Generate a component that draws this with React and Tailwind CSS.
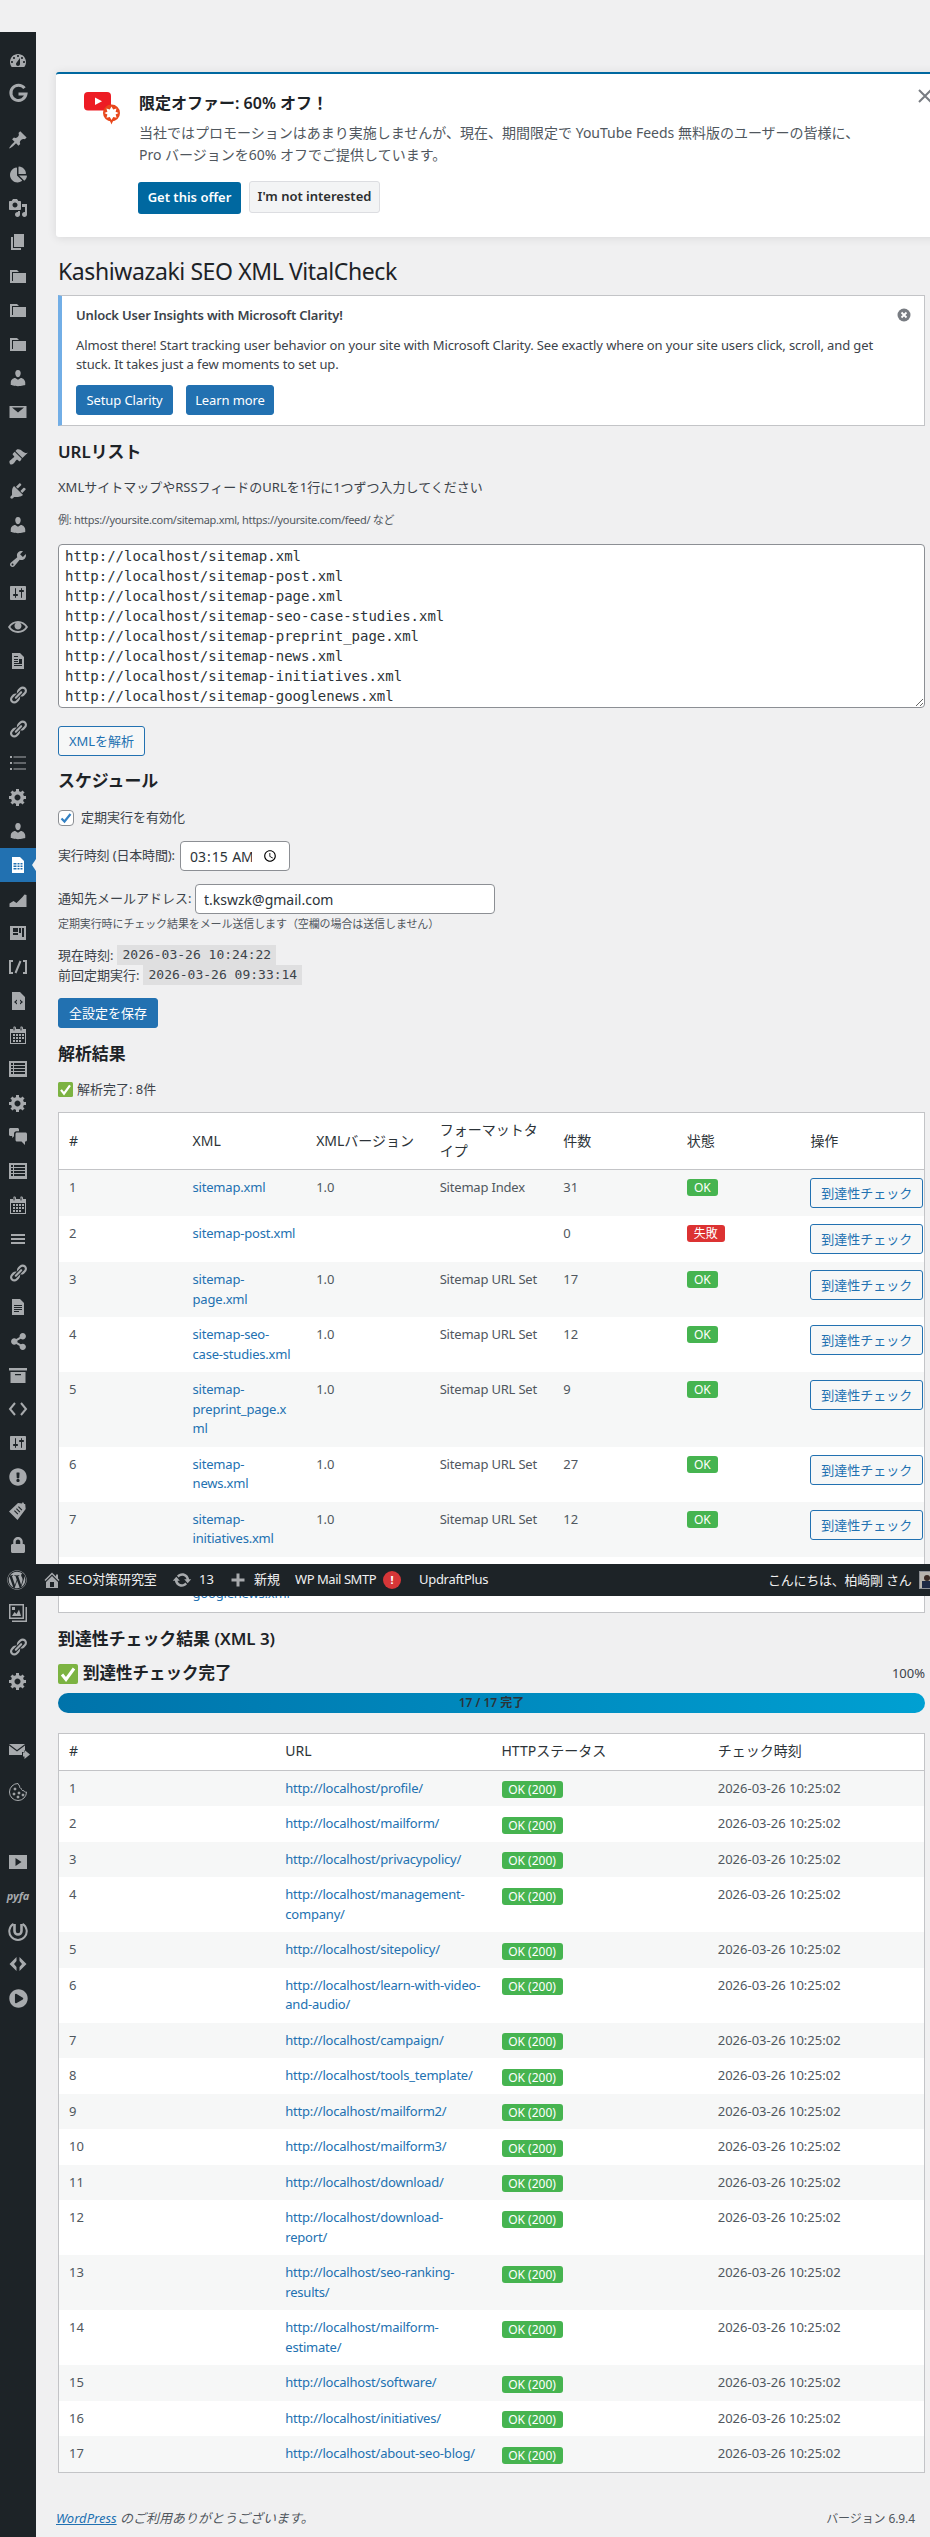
import React from "react";
import { FaChartPie, FaShareAlt, FaExclamationCircle, FaLock, FaWordpress, FaPlayCircle } from "react-icons/fa";

const P = {
  dashboard: "M3.76 16h12.48c1.1-1.37 1.76-3.11 1.76-5 0-4.42-3.58-8-8-8s-8 3.58-8 8c0 1.89.66 3.63 1.76 5zM10 4c.55 0 1 .45 1 1s-.45 1-1 1-1-.45-1-1 .45-1 1-1zM6 6c.55 0 1 .45 1 1s-.45 1-1 1-1-.45-1-1 .45-1 1-1zm8 0c.55 0 1 .45 1 1s-.45 1-1 1-1-.45-1-1 .45-1 1-1zm-5.37 5.55L12 7v6c0 1.1-.9 2-2 2s-2-.9-2-2c0-.57.24-1.08.63-1.45zM4 10c.55 0 1 .45 1 1s-.45 1-1 1-1-.45-1-1 .45-1 1-1zm12 0c.55 0 1 .45 1 1s-.45 1-1 1-1-.45-1-1 .45-1 1-1z",
  pin: "M10.44 3.02l1.82-1.82 6.36 6.35-1.83 1.82c-1.05-.68-2.48-.57-3.41.36l-.75.75c-.92.93-1.04 2.35-.35 3.41l-1.83 1.82-2.41-2.41-2.8 2.79c-.42.42-3.38 2.71-3.8 2.29s1.86-3.39 2.28-3.81l2.79-2.79L4.1 9.36l1.83-1.82c1.05.69 2.48.57 3.4-.36l.75-.75c.93-.92 1.05-2.35.36-3.41z",
  media: "M13 11V4c0-.55-.45-1-1-1h-1.67L9 1H5L3.67 3H2c-.55 0-1 .45-1 1v7c0 .55.45 1 1 1h10c.55 0 1-.45 1-1zM7 4.5c1.38 0 2.5 1.12 2.5 2.5S8.38 9.5 7 9.5 4.5 8.38 4.5 7 5.62 4.5 7 4.5zM14 6h5v10.5c0 1.38-1.12 2.5-2.5 2.5S14 17.88 14 16.5s1.12-2.5 2.5-2.5c.17 0 .34.02.5.05V9h-3V6zm-4 8.05V13h2v3.5c0 1.38-1.12 2.5-2.5 2.5S7 17.88 7 16.5 8.12 14 9.5 14c.17 0 .34.02.5.05z",
  page: "M6 15V2h10v13H6zm-1 1h8v2H3V5h2v11z",
  folder: "M5 7h13v10H2V4h7l2 2H4v9h1V7z",
  user: "M10 9.25c-2.27 0-2.73-3.44-2.73-3.44C7 4.02 7.82 2 9.97 2c2.16 0 2.98 2.02 2.71 3.81 0 0-.41 3.44-2.68 3.44zm0 2.57L12.72 10c2.39 0 4.52 2.33 4.52 4.53v2.49s-3.65 1.13-7.24 1.13c-3.65 0-7.24-1.13-7.24-1.13v-2.49c0-2.25 1.94-4.48 4.47-4.48z",
  mail: "M1.5 4h17v12h-17V4zm2.5 1.5L10 10.5l6-5H4z",
  brush: "M14.48 11.06L7.41 3.99l1.5-1.5c.5-.56 2.3-.47 3.51.32 1.21.8 1.43 1.28 2.91 2.1 1.18.64 2.45 1.26 4.45.85zm-.71.71L6.7 4.7 4.93 6.47c-.39.39-.39 1.02 0 1.41l1.06 1.06c.39.39.39 1.03 0 1.42-.6.6-1.43 1.11-2.21 1.69-.35.26-.7.53-1.01.84C1.43 13.23.87 14.7 2 17c1.04 1.04 2.51.48 3.85-.77.31-.31.58-.66.84-1.01.58-.78 1.09-1.61 1.69-2.21.39-.39 1.03-.39 1.42 0l1.06 1.06c.39.39 1.02.39 1.41 0z",
  plug: "M13.11 4.36L9.87 7.6 8 5.73l3.24-3.24c.35-.34 1.05-.2 1.56.32.52.51.66 1.21.31 1.55zm-8 1.77l.91-1.12 9.01 9.01-1.19.84c-.71.71-2.63 1.16-3.82 1.16H6.14L4.9 17.26c-.59.59-1.54.59-2.12 0-.59-.58-.59-1.53 0-2.12l1.24-1.24v-3.88c0-1.13.4-3.19 1.09-3.89zm7.26 3.97l3.24-3.24c.34-.35 1.04-.21 1.55.31.52.51.66 1.21.31 1.55l-3.24 3.25z",
  tools: "M16.68 9.77c-1.34 1.34-3.3 1.67-4.95.99l-5.41 6.52c-.99.99-2.59.99-3.58 0s-.99-2.59 0-3.57l6.52-5.42c-.68-1.65-.35-3.61.99-4.95 1.28-1.28 3.12-1.62 4.72-1.06l-2.89 2.89 2.82 2.82 2.86-2.87c.53 1.58.18 3.39-1.08 4.67zM3.81 16.21c.4.39 1.04.39 1.43 0 .4-.4.4-1.04 0-1.43-.39-.4-1.03-.4-1.43 0-.39.39-.39 1.03 0 1.43z",
  sliders: "M18 16V4c0-.55-.45-1-1-1H3c-.55 0-1 .45-1 1v12c0 .55.45 1 1 1h14c.55 0 1-.45 1-1zM8 11h1c.55 0 1 .45 1 1s-.45 1-1 1H8v1.5c0 .28-.22.5-.5.5s-.5-.22-.5-.5V13H6c-.55 0-1-.45-1-1s.45-1 1-1h1V5.5c0-.28.22-.5.5-.5s.5.22.5.5V11zm5-2h-1c-.55 0-1-.45-1-1s.45-1 1-1h1V5.5c0-.28.22-.5.5-.5s.5.22.5.5V7h1c.55 0 1 .45 1 1s-.45 1-1 1h-1v5.5c0 .28-.22.5-.5.5s-.5-.22-.5-.5V9z",
  eye: "M19.7 9.4C17.7 6 14 3.9 10 3.9S2.3 6 .3 9.4L0 10l.3.6c2 3.4 5.7 5.5 9.7 5.5s7.7-2.1 9.7-5.5l.3-.6-.3-.6zM10 14.1c-3.1 0-6-1.6-7.7-4.1C3.6 8 5.7 6.6 8 6.1c-.9.6-1.5 1.7-1.5 2.9 0 1.9 1.6 3.5 3.5 3.5s3.5-1.6 3.5-3.5c0-1.2-.6-2.3-1.5-2.9 2.3.5 4.4 1.9 5.7 3.9-1.7 2.5-4.6 4.1-7.7 4.1z",
  news: "M12 2l4 4v12H4V2h8zM6 8v1h4V8H6zM11 8v4h3V8h-3zM6 10v1h4v-1H6zM6 12v1h8v-1H6zM6 14v1h8v-1H6zM6 5v1h4V5H6z",
  text: "M12 2l4 4v12H4V2h8zM6 8v1h8V8H6zM6 10v1h8v-1H6zM6 12v1h8v-1H6zM6 14v1h5v-1H6z",
  sheet: "M12 2l4 4v12H4V2h8zM5.5 8v1.5h3V8h-3zM9.5 8v1.5h2V8h-2zM12.5 8v1.5h2V8h-2zM5.5 10.5V12h3v-1.5h-3zM9.5 10.5V12h2v-1.5h-2zM12.5 10.5V12h2v-1.5h-2zM5.5 13v1.5h3V13h-3zM9.5 13v1.5h2V13h-2zM12.5 13v1.5h2V13h-2z",
  link: "M17.74 2.76c1.68 1.69 1.68 4.41 0 6.1l-1.53 1.52c-1.12 1.12-2.7 1.47-4.14 1.09l2.62-2.61.76-.77.76-.76c.84-.84.84-2.2 0-3.04-.84-.85-2.2-.85-3.04 0l-.77.76-3.38 3.38c-.37-1.44-.02-3.02 1.1-4.14l1.52-1.53c1.69-1.68 4.42-1.68 6.1 0zM8.59 13.43l5.34-5.34c.42-.42.42-1.1 0-1.52-.44-.43-1.13-.39-1.53 0l-5.33 5.34c-.42.42-.42 1.1 0 1.52.44.43 1.13.39 1.52 0zm-.76 2.29l4.14-4.15c.38 1.44.03 3.02-1.09 4.14l-1.52 1.53c-1.69 1.68-4.41 1.68-6.1 0-1.68-1.68-1.68-4.42 0-6.1l1.53-1.52c1.12-1.12 2.7-1.47 4.14-1.1l-4.14 4.15c-.85.84-.85 2.2 0 3.05.84.84 2.2.84 3.04 0z",
  bullets: "M2 3h2v2H2zM5.5 3.5H18v1H5.5zM2 9h2v2H2zM5.5 9.5H18v1H5.5zM2 15h2v2H2zM5.5 15.5H18v1H5.5z",
  gear: "M18 12h-2.18c-.17.7-.44 1.35-.81 1.93l1.54 1.54-2.1 2.1-1.54-1.54c-.58.36-1.23.63-1.91.79V19H8v-2.18c-.68-.16-1.33-.43-1.91-.79l-1.54 1.54-2.12-2.12 1.54-1.54c-.36-.58-.63-1.23-.79-1.91H1V9.03h2.17c.16-.7.44-1.35.8-1.94L2.43 5.55l2.1-2.1 1.54 1.54c.58-.37 1.24-.64 1.93-.81V2h3v2.18c.68.16 1.33.43 1.91.79l1.54-1.54 2.12 2.12-1.54 1.54c.36.59.64 1.24.8 1.94H18V12zm-8.5 1.5c1.66 0 3-1.34 3-3s-1.34-3-3-3-3 1.34-3 3 1.34 3 3 3z",
  chart: "M1.5 18v-3.5l4-2.6 3 2.2 6-6 2-2.6 2 .5V18z",
  layout: "M2 3h16v14H2V3zM5 5v4h5V5H5zM11 5v5h2V5h-2zM5 10v2h5v-2H5zM14 5v9h2V5h-2z",
  codefile: "M12 1l5 5v13H4V1h8zM9 8.5L6 11l3 2.5V12l-1.2-1L9 10V8.5zM12 8.5V10l1.2 1L12 12v1.5l3-2.5-3-2.5z",
  calendar: "M15 4h3v15H2V4h3V3c0-.41.15-.76.44-1.06.29-.29.65-.44 1.06-.44s.77.15 1.06.44c.29.3.44.65.44 1.06v1h4V3c0-.41.15-.76.44-1.06.29-.29.65-.44 1.06-.44s.77.15 1.06.44c.29.3.44.65.44 1.06v1zM6 5.5c.41 0 .5-.09.5-.5V3c0-.41-.09-.5-.5-.5s-.5.09-.5.5v2c0 .41.09.5.5.5zm7 0c.41 0 .5-.09.5-.5V3c0-.41-.09-.5-.5-.5s-.5.09-.5.5v2c0 .41.09.5.5.5zm4 12.5V8H3v10h14zM5 9h2v2H5V9zm3 0h2v2H8V9zm3 0h2v2h-2V9zm3 0h2v2h-2V9zm-9 3h2v2H5v-2zm3 0h2v2H8v-2zm3 0h2v2h-2v-2zm3 0h2v2h-2v-2zm-9 3h2v2H5v-2zm3 0h2v2H8v-2zm3 0h2v2h-2v-2z",
  list: "M1 2h18v16H1V2zM3 4v2h2V4H3zM6 4v2h11V4H6zM3 7v2h2V7H3zM6 7v2h11V7H6zM3 10v2h2v-2H3zM6 10v2h11v-2H6zM3 13v2h2v-2H3zM6 13v2h11v-2H6z",
  menu: "M3 5h14v2H3zM3 9h14v2H3zM3 13h14v2H3z",
  comments: "M1 2.5c0-.8.7-1.5 1.5-1.5h7C10.3 1 11 1.7 11 2.5v1.7H8.5C7 4.2 6 5.2 6 6.7V9.2L4.2 11V9H2.5C1.7 9 1 8.3 1 7.5zM9 5.5h8.5c.8 0 1.5.7 1.5 1.5v6c0 .8-.7 1.5-1.5 1.5H17V18l-3.5-3.5H9c-.8 0-1.5-.7-1.5-1.5V7c0-.8.7-1.5 1.5-1.5z",
  archive: "M1 3h18v2.5H1zM2.5 7h15v11h-15zM7 9v1.2h6V9z",
  gallery: "M1 1h15v15H1V1zM2.5 2.5v12h12v-12h-12zM4 13l2.5-4 2 2 2.5-4.5 2 6.5zM4 4h3v3H4zM17.5 4H19v15H4v-1.5h13.5z",
  mailfwd: "M2 4h16l-8 6-8-6zM2 5.6l8 6 8-6V12h-3v3H2zM16 12.5h1.5V10l5.5 4.5-5.5 4.5v-2.5H16z",
  video: "M1 3h18v14H1V3zM7.5 6v8l6-4-6-4z",
  diamond: "M8.5 3v4L6 10l2.5 3v4L1.5 10zM11.5 3l7 7-7 7v-4l2.5-3-2.5-3z",
  tag: "M1 10.5L10 2l4 .4.5-1.2 1.6.7-.4 1 1.5.2.5 5L9.5 19zM6 10l3.5 3.5.8-.8-3.5-3.5zM8 8l3.5 3.5.8-.8-3.5-3.5zM10 6l3.5 3.5.8-.8-3.5-3.5z",
};

const D = ({ d, cls = "text-[#a7aaad]", w = 20, h = 20, vb = "0 0 20 20" }) => (
  <svg width={w} height={h} viewBox={vb} className={cls} fill="currentColor">
    <path d={d} fillRule="evenodd" />
  </svg>
);

const Grey = ({ children }) => <span className="text-[#a7aaad] flex items-center justify-center">{children}</span>;

const G = () => (
  <svg width="20" height="20" viewBox="0 0 20 20" fill="none" className="text-[#a7aaad]">
    <path d="M16.5 5.2A7.6 7.6 0 1 0 18 11H10.5" stroke="currentColor" strokeWidth="3" />
  </svg>
);
const Slash = () => (
  <svg width="20" height="20" viewBox="0 0 20 20" fill="none" className="text-[#a7aaad]" stroke="currentColor" strokeWidth="2">
    <path d="M5 4H2v12h3M15 4h3v12h-3M7.5 16l5-12" />
  </svg>
);
const CodeIcon = () => (
  <svg width="20" height="20" viewBox="0 0 20 20" fill="none" className="text-[#a7aaad]" stroke="currentColor" strokeWidth="2">
    <path d="M7 4l-5 6 5 6M13 4l5 6-5 6" />
  </svg>
);
const Cookie = () => (
  <svg width="20" height="20" viewBox="0 0 20 20" fill="none" className="text-[#a7aaad]" stroke="currentColor" strokeWidth="1">
    <path d="M10 1.5a8.5 8.5 0 1 0 8.5 8.5c-1.2.4-2.3-.2-2.6-1.3-1.4.3-2.6-.7-2.5-2.1-1.4-.1-2.1-1.4-1.7-2.6-.9-.5-1.4-1.5-1.7-2.5z" />
    <circle cx="7" cy="7" r="1" fill="currentColor" />
    <circle cx="6" cy="12" r="1" fill="currentColor" />
    <circle cx="11" cy="11" r="1" fill="currentColor" />
    <circle cx="10" cy="15" r="1" fill="currentColor" />
    <circle cx="15" cy="13" r="1" fill="currentColor" />
  </svg>
);
const RingU = () => (
  <svg width="20" height="20" viewBox="0 0 20 20" fill="none" className="text-[#a7aaad]" stroke="currentColor">
    <path d="M5.5 2.8A8.7 8.7 0 1 0 14.5 2.8" strokeWidth="2" />
    <path d="M6.5 3v7a3.5 3.5 0 0 0 7 0V3" strokeWidth="2.6" />
  </svg>
);

const items = [
  { c: <D d={P.dashboard} />, m: "mt-[12px]" },
  { c: <G />, m: "mt-[-2px]" },
  { c: <D d={P.pin} />, m: "mt-[13px]" },
  { c: <Grey><FaChartPie size={17} /></Grey>, m: "" },
  { c: <D d={P.media} />, m: "" },
  { c: <D d={P.page} />, m: "" },
  { c: <D d={P.folder} />, m: "" },
  { c: <D d={P.folder} />, m: "" },
  { c: <D d={P.folder} />, m: "" },
  { c: <D d={P.user} />, m: "" },
  { c: <D d={P.mail} />, m: "" },
  { c: <D d={P.brush} />, m: "mt-[11px]" },
  { c: <D d={P.plug} />, m: "" },
  { c: <D d={P.user} />, m: "" },
  { c: <D d={P.tools} />, m: "" },
  { c: <D d={P.sliders} />, m: "" },
  { c: <D d={P.eye} />, m: "" },
  { c: <D d={P.news} />, m: "" },
  { c: <D d={P.link} />, m: "" },
  { c: <D d={P.link} />, m: "" },
  { c: <D d={P.bullets} />, m: "" },
  { c: <D d={P.gear} />, m: "" },
  { c: <D d={P.user} />, m: "" },
  { c: <D d={P.sheet} cls="text-white" />, m: "", active: true },
  { c: <D d={P.chart} />, m: "" },
  { c: <D d={P.layout} />, m: "" },
  { c: <Slash />, m: "" },
  { c: <D d={P.codefile} />, m: "" },
  { c: <D d={P.calendar} />, m: "" },
  { c: <D d={P.list} />, m: "" },
  { c: <D d={P.gear} />, m: "" },
  { c: <D d={P.comments} />, m: "" },
  { c: <D d={P.list} />, m: "" },
  { c: <D d={P.calendar} />, m: "" },
  { c: <D d={P.menu} />, m: "" },
  { c: <D d={P.link} />, m: "" },
  { c: <D d={P.text} />, m: "" },
  { c: <Grey><FaShareAlt size={17} /></Grey>, m: "" },
  { c: <D d={P.archive} />, m: "" },
  { c: <CodeIcon />, m: "" },
  { c: <D d={P.sliders} />, m: "" },
  { c: <Grey><FaExclamationCircle size={18} /></Grey>, m: "" },
  { c: <D d={P.tag} />, m: "" },
  { c: <Grey><FaLock size={16} /></Grey>, m: "" },
  { c: <D d={P.gallery} />, m: "mt-[34px]" },
  { c: <D d={P.link} />, m: "" },
  { c: <D d={P.gear} />, m: "" },
  { c: <D d={P.mailfwd} w={23} vb="0 0 23 20" />, m: "mt-[35px]" },
  { c: <Cookie />, m: "mt-[8px]" },
  { c: <D d={P.video} />, m: "mt-[36px]" },
  { c: <span className="text-[#a7aaad] text-[11px] italic font-bold leading-none">pyfa</span>, m: "mt-[-1px]" },
  { c: <RingU />, m: "mt-[2px]" },
  { c: <D d={P.diamond} />, m: "mt-[-1px]" },
  { c: <Grey><FaPlayCircle size={19} /></Grey>, m: "" },
];

const Sidebar = () => (
  <aside className="w-[36px] shrink-0 mt-[32px] bg-[#1d2327]">
    {items.map((it, i) => (
      <div key={i} className={`relative h-[34px] flex items-center justify-center ${it.m} ${it.active ? "bg-[#2271b1]" : ""}`}>
        {it.c}
        {it.active && (
          <span className="absolute right-0 top-[11px] w-0 h-0 border-y-[6px] border-y-transparent border-r-[4px] border-r-[#f0f0f1]" />
        )}
      </div>
    ))}
  </aside>
);

const Check = ({ w = 15, h = 15 }) => (
  <svg width={w} height={h} viewBox="0 0 20 20" className="shrink-0">
    <rect x="0" y="0" width="20" height="20" rx="2" fill="#7cb342" />
    <path d="M4 10.5l4 5 8-11" fill="none" stroke="#fff" strokeWidth="3" />
  </svg>
);

const Btn = ({ children, cls = "" }) => (
  <button className={`h-[30px] rounded-[3px] text-[13px] leading-[28px] whitespace-nowrap bg-[#2271b1] text-white border border-[#2271b1] ${cls}`}>{children}</button>
);
const Btn2 = ({ children, cls = "" }) => (
  <button className={`h-[30px] rounded-[3px] text-[13px] leading-[28px] bg-[#f6f7f7] text-[#2271b1] border border-[#2271b1] ${cls}`}>{children}</button>
);
const H2 = ({ children, cls = "" }) => <h2 className={`text-[16.9px] leading-[24px] font-semibold text-[#1d2327] ${cls}`}>{children}</h2>;
const OK = ({ children = "OK", w = "w-[31px]" }) => (
  <span className={`block ${w} h-[17px] rounded-[3px] bg-[#46b450] text-white text-[12px] leading-[17px] text-center`}>{children}</span>
);

const rows1 = [
  ["1", ["sitemap.xml"], "1.0", "Sitemap Index", "31", true],
  ["2", ["sitemap-post.xml"], "", "", "0", false],
  ["3", ["sitemap-", "page.xml"], "1.0", "Sitemap URL Set", "17", true],
  ["4", ["sitemap-seo-", "case-studies.xml"], "1.0", "Sitemap URL Set", "12", true],
  ["5", ["sitemap-", "preprint_page.x", "ml"], "1.0", "Sitemap URL Set", "9", true],
  ["6", ["sitemap-", "news.xml"], "1.0", "Sitemap URL Set", "27", true],
  ["7", ["sitemap-", "initiatives.xml"], "1.0", "Sitemap URL Set", "12", true],
  ["8", ["sitemap-", "googlenews.xml"], "1.0", "Sitemap URL Set", "8", true],
];

const rows2 = [
  ["profile/"], ["mailform/"], ["privacypolicy/"], ["management-", "company/"], ["sitepolicy/"],
  ["learn-with-video-", "and-audio/"], ["campaign/"], ["tools_template/"], ["mailform2/"], ["mailform3/"],
  ["download/"], ["download-", "report/"], ["seo-ranking-", "results/"], ["mailform-", "estimate/"],
  ["software/"], ["initiatives/"], ["about-seo-blog/"],
];

const td = "align-top px-[10px] py-[8px] text-[13px] leading-[19.5px] text-[#50575e]";
const th = "align-middle px-[10px] pb-[2px] text-left font-normal text-[14px] leading-[21px] text-[#2c3338] border-b border-[#c3c4c7]";
const link = "text-[#2271b1] tracking-[-0.2px]";

const AdminBar = () => (
  <div className="absolute left-0 top-[1564px] w-[930px] h-[32px] bg-[#1d2327] flex items-center text-[13px] text-[#f0f0f1] whitespace-nowrap overflow-hidden">
    <span className="ml-[7px] text-[#a7aaad]"><FaWordpress size={20} /></span>
    <span className="ml-[15px]"><D d="M16 8.5l1.53 1.53-1.06 1.06L10 4.62l-6.47 6.47-1.06-1.06L10 2.5l4 4v-2h2v4zm-6-2.46l6 5.99V18H4v-5.97zM12 17v-5H8v5h4z" /></span>
    <span className="ml-[6px] w-[88px] tracking-[-0.1px]">SEO対策研究室</span>
    <span className="ml-[16px]"><D d="M10.2 3.28c3.53 0 6.43 2.61 6.92 6h2.08l-3.5 4-3.5-4h2.32c-.45-1.97-2.21-3.45-4.32-3.45-1.45 0-2.73.71-3.54 1.78L4.95 5.66C6.23 4.2 8.11 3.28 10.2 3.28zm-.4 13.44c-3.52 0-6.43-2.61-6.92-6H.8l3.5-4c1.17 1.33 2.33 2.67 3.5 4H5.48c.45 1.97 2.21 3.45 4.32 3.45 1.45 0 2.73-.71 3.54-1.78l1.71 1.95c-1.28 1.46-3.15 2.38-5.25 2.38z" /></span>
    <span className="ml-[7px] w-[13px]">13</span>
    <span className="ml-[16px]"><D d="M11.5 3.5v5h5v3h-5v5h-3v-5h-5v-3h5v-5z" /></span>
    <span className="ml-[6px] w-[26px]">新規</span>
    <span className="ml-[15px] w-[83px] tracking-[-0.45px]">WP Mail SMTP</span>
    <span className="ml-[5px] w-[18px] h-[18px] rounded-full bg-[#d63638] text-white text-center text-[11px] leading-[18px] font-bold">!</span>
    <span className="ml-[18px] tracking-[-0.3px]">UpdraftPlus</span>
    <span className="absolute left-[768px] top-0 leading-[32px] w-[150px] tracking-[-0.25px]">こんにちは、柏崎剛 さん</span>
    <span className="absolute left-[919px] top-[7px] w-[18px] h-[18px] bg-[#b8b4ac] overflow-hidden border border-[#8c8f94]">
      <span className="block mt-[3px] ml-[4px] w-[6px] h-[6px] rounded-full bg-[#3a2a22]" />
      <span className="block ml-[2px] w-[10px] h-[8px] bg-[#1e2a44]" />
    </span>
  </div>
);

export default function App() {
  return (
    <div className="relative w-[930px] h-[2537px] overflow-hidden flex bg-[#f0f0f1] text-[#3c434a] text-[13px] font-['Noto_Sans','Noto_Sans_CJK_JP',sans-serif]">
      <Sidebar />
      <main className="min-w-0 flex-1 pl-[22px] pr-[5px]">
        {/* promo notice */}
        <section className="relative ml-[-2px] mt-[72px] w-[890px] h-[165px] bg-white border-t-2 border-[#0068a0] rounded-[3px] shadow-[0_1px_10px_rgba(0,0,0,0.1)] flex pl-[28px]">
          <svg width="36" height="33" viewBox="0 0 36 33" className="mt-[18px] shrink-0">
            <rect x="0" y="0" width="27" height="18.5" rx="4" fill="#ed1c24" />
            <path d="M11 5.5v7.5l7-3.8z" fill="#fff" />
            <circle cx="27.5" cy="21" r="8.5" fill="#e8471c" />
            <path d="M27.5 14.5l1.7 3 3.3-1-.9 3.3 3 1.2-3 1.6 1 3.2-3.3-.9-1.8 3-1.7-3-3.3.9.9-3.2-3-1.6 3-1.2-1-3.3 3.4 1z" fill="#fff" />
            <path d="M26 29l1.5 3.5 1.5-3.5z" fill="#e8471c" />
          </svg>
          <div className="ml-[19px]">
            <h3 className="mt-[17px] text-[16px] leading-[24px] font-semibold text-[#1d2327]">限定オファー: 60% オフ！</h3>
            <p className="mt-[7px] text-[14px] leading-[22px] text-[#50575e] whitespace-nowrap">当社ではプロモーションはあまり実施しませんが、現在、期間限定で YouTube Feeds 無料版のユーザーの皆様に、</p>
            <p className="text-[14px] leading-[22px] text-[#50575e] whitespace-nowrap">Pro バージョンを60% オフでご提供しています。</p>
            <div className="mt-[15px] flex items-start gap-[8px] ml-[-1px]">
              <button className="mt-[1px] w-[103px] h-[32px] rounded-[3px] bg-[#0068a0] text-white text-[13px] font-semibold">Get this offer</button>
              <button className="w-[131px] h-[32px] rounded-[3px] bg-[#f3f4f5] border border-[#dcdde1] text-[#2c2e2f] text-[13px] font-semibold">I'm not interested</button>
            </div>
          </div>
          <svg width="14" height="14" viewBox="0 0 14 14" className="absolute left-[862px] top-[15px]" stroke="#787c82" strokeWidth="2">
            <path d="M1 1l12 12M13 1L1 13" />
          </svg>
        </section>

        <h1 className="mt-[19px] text-[23px] leading-[30px] font-normal text-[#1d2327] whitespace-nowrap tracking-[-0.4px]">Kashiwazaki SEO XML VitalCheck</h1>

        {/* clarity */}
        <section className="relative mt-[9px] h-[131px] bg-white border border-[#c3c4c7] border-l-4 border-l-[#72aee6] pl-[14px] pr-[12px]">
          <p className="mt-[10px] text-[13px] leading-[19px] font-semibold tracking-[-0.18px]">Unlock User Insights with Microsoft Clarity!</p>
          <p className="mt-[11px] text-[13px] leading-[19px] tracking-[-0.115px] whitespace-nowrap">Almost there! Start tracking user behavior on your site with Microsoft Clarity. See exactly where on your site users click, scroll, and get<br />stuck. It takes just a few moments to set up.</p>
          <div className="mt-[11px] flex gap-[13px] tracking-[-0.1px]">
            <Btn cls="w-[97px]">Setup Clarity</Btn>
            <Btn cls="w-[88px]">Learn more</Btn>
          </div>
          <svg width="14" height="14" viewBox="0 0 14 14" className="absolute right-[13px] top-[12px]">
            <circle cx="7" cy="7" r="6.5" fill="#787c82" />
            <path d="M4.5 4.5l5 5M9.5 4.5l-5 5" stroke="#fff" strokeWidth="1.8" />
          </svg>
        </section>

        <H2 cls="mt-[14px]">URLリスト</H2>
        <p className="mt-[13px] text-[13px] leading-[20px] whitespace-nowrap">XMLサイトマップやRSSフィードのURLを1行に1つずつ入力してください</p>
        <p className="mt-[14px] text-[11px] leading-[18px] text-[#50575e] whitespace-nowrap tracking-[-0.3px]">例: https://yoursite.com/sitemap.xml, https://yoursite.com/feed/ など</p>
        <textarea
          readOnly
          wrap="off"
          className="mt-[15px] block w-full h-[164px] bg-white border border-[#8c8f94] rounded-[4px] px-[6px] py-[1px] font-['DejaVu_Sans_Mono',monospace] text-[14px] leading-[20px] text-[#2c3338] overflow-hidden resize"
          defaultValue={"http://localhost/sitemap.xml\nhttp://localhost/sitemap-post.xml\nhttp://localhost/sitemap-page.xml\nhttp://localhost/sitemap-seo-case-studies.xml\nhttp://localhost/sitemap-preprint_page.xml\nhttp://localhost/sitemap-news.xml\nhttp://localhost/sitemap-initiatives.xml\nhttp://localhost/sitemap-googlenews.xml"}
        />
        <Btn2 cls="mt-[18px] w-[87px] block">XMLを解析</Btn2>

        <H2 cls="mt-[13px]">スケジュール</H2>
        <label className="mt-[15px] h-[20px] flex items-center">
          <span className="w-[16px] h-[16px] bg-white border border-[#8c8f94] rounded-[4px] flex items-center justify-center">
            <svg width="14" height="14" viewBox="0 0 14 14"><path d="M2.5 7.5l3 3 6-7.5" fill="none" stroke="#3582c4" strokeWidth="2.2" /></svg>
          </span>
          <span className="ml-[7px]">定期実行を有効化</span>
        </label>
        <div className="mt-[13px] flex items-center h-[30px]">
          <span className="w-[122px] whitespace-nowrap tracking-[-0.15px]">実行時刻 (日本時間):</span>
          <input type="time" defaultValue="03:15" className="w-[110px] h-[30px] bg-white border border-[#8c8f94] rounded-[4px] pl-[8px] pr-[8px] text-[14px] text-[#2c3338]" />
        </div>
        <div className="mt-[13px] flex items-center h-[30px]">
          <span className="w-[137px] whitespace-nowrap">通知先メールアドレス:</span>
          <input type="email" readOnly defaultValue="t.kswzk@gmail.com" className="w-[300px] h-[30px] bg-white border border-[#8c8f94] rounded-[4px] px-[8px] text-[14px] text-[#2c3338]" />
        </div>
        <p className="mt-[1px] text-[11px] leading-[18px] text-[#50575e] whitespace-nowrap tracking-[-0.1px]">定期実行時にチェック結果をメール送信します（空欄の場合は送信しません）</p>
        <div className="mt-[12px] leading-[20px]">
          <div className="flex items-center h-[20px]">
            <span>現在時刻:</span>
            <code className="ml-[4px] bg-[rgba(0,0,0,0.07)] px-[5px] h-[20px] font-['DejaVu_Sans_Mono',monospace] text-[13px] leading-[20px]">2026-03-26 10:24:22</code>
          </div>
          <div className="flex items-center h-[20px]">
            <span>前回定期実行:</span>
            <code className="ml-[4px] bg-[rgba(0,0,0,0.07)] px-[5px] h-[20px] font-['DejaVu_Sans_Mono',monospace] text-[13px] leading-[20px]">2026-03-26 09:33:14</code>
          </div>
        </div>
        <Btn cls="mt-[13px] block w-[100px]">全設定を保存</Btn>

        <H2 cls="mt-[14px]">解析結果</H2>
        <p className="mt-[13px] leading-[20px] flex items-center gap-[4px]"><Check />解析完了: 8件</p>

        <table className="mt-[13px] w-full table-fixed border border-[#c3c4c7] border-separate border-spacing-0 bg-white">
          <thead>
            <tr className="h-[57px]">
              <th className={th}>#</th>
              <th className={th}>XML</th>
              <th className={th + " whitespace-nowrap"}>XMLバージョン</th>
              <th className={th}>フォーマットタイプ</th>
              <th className={th}>件数</th>
              <th className={th}>状態</th>
              <th className={th}>操作</th>
            </tr>
          </thead>
          <tbody>
            {rows1.map((r, i) => (
              <tr key={r[0]} className={i % 2 === 0 ? "bg-[#f6f7f7]" : "bg-white"}>
                <td className={td}>{r[0]}</td>
                <td className={td}>
                  <span className={link + " whitespace-nowrap"}>
                    {r[1].map((l, j) => <span key={j} className="block">{l}</span>)}
                  </span>
                </td>
                <td className={td}>{r[2]}</td>
                <td className={td + " whitespace-nowrap tracking-[-0.2px]"}>{r[3]}</td>
                <td className={td}>{r[4]}</td>
                <td className={td + " pt-[9px]"}>
                  {r[5] ? <OK /> : <OK w="w-[38px] bg-[#dc3232]">失敗</OK>}
                </td>
                <td className={td}>
                  <Btn2 cls="block w-[113px] whitespace-nowrap">到達性チェック</Btn2>
                </td>
              </tr>
            ))}
          </tbody>
        </table>

        <H2 cls="mt-[14px]">到達性チェック結果 (XML 3)</H2>
        <div className="mt-[11px] h-[24px] flex items-center">
          <Check w={20} h={20} />
          <span className="ml-[5px] text-[16.5px] font-semibold text-[#1d2327]">到達性チェック完了</span>
          <span className="ml-auto text-[13px]">100%</span>
        </div>
        <div className="mt-[7px] h-[20px] rounded-[10px] bg-linear-to-r from-[#0073aa] to-[#00a0d2] text-center text-[12px] leading-[20px] font-semibold text-[#2c3338]">17 / 17 完了</div>

        <table className="mt-[20px] w-full table-fixed border border-[#c3c4c7] border-separate border-spacing-0 bg-white">
          <thead>
            <tr className="h-[37px]">
              <th className={th}>#</th>
              <th className={th}>URL</th>
              <th className={th}>HTTPステータス</th>
              <th className={th}>チェック時刻</th>
            </tr>
          </thead>
          <tbody>
            {rows2.map((u, i) => (
              <tr key={i} className={i % 2 === 0 ? "bg-[#f6f7f7]" : "bg-white"}>
                <td className={td}>{i + 1}</td>
                <td className={td}>
                  <span className={link + " whitespace-nowrap"}>
                    {u.map((l, j) => <span key={j} className="block">{j === 0 ? "http://localhost/" + l : l}</span>)}
                  </span>
                </td>
                <td className={td + " pt-[10.5px]"}><OK w="w-[61px]">OK (200)</OK></td>
                <td className={td}>2026-03-26 10:25:02</td>
              </tr>
            ))}
          </tbody>
        </table>

        <footer className="mt-[36px] ml-[-2px] flex justify-between leading-[19px] text-[#50575e]">
          <p className="italic"><span className="text-[#2271b1] underline">WordPress</span> のご利用ありがとうございます。</p>
          <p className="mr-[10px] text-[12px] tracking-[-0.1px]">バージョン 6.9.4</p>
        </footer>
      </main>
      <AdminBar />
    </div>
  );
}
